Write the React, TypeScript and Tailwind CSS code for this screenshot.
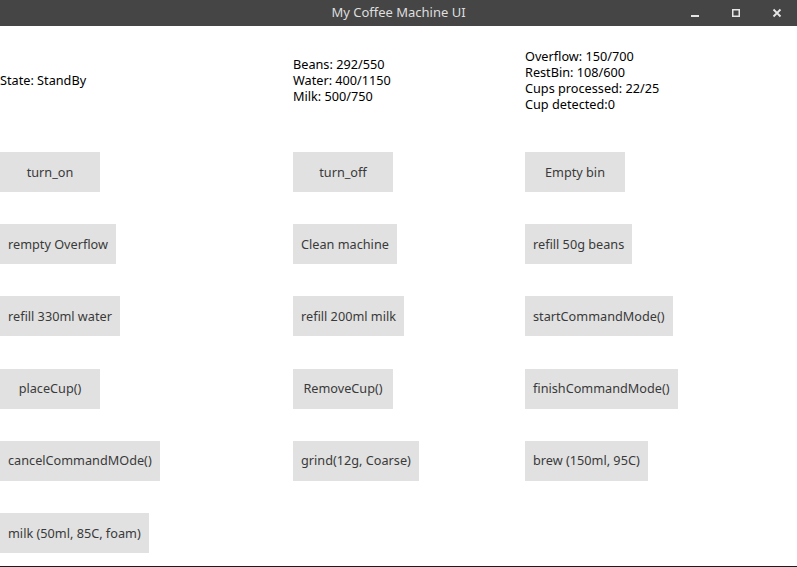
import React from 'react';

const font = { fontFamily: '"Noto Sans", "DejaVu Sans", sans-serif' };

function Btn({ label }: { label: string }) {
  return (
    <div>
      <button className="h-[40px] min-w-[100px] px-[8px] bg-[#e1e1e1] text-[#3a3a3a] text-[12.7px] leading-none whitespace-nowrap">
        {label}
      </button>
    </div>
  );
}

const rows: (string | null)[][] = [
  ['turn_on', 'turn_off', 'Empty bin'],
  ['rempty Overflow', 'Clean machine', 'refill 50g beans'],
  ['refill 330ml water', 'refill 200ml milk', 'startCommandMode()'],
  ['placeCup()', 'RemoveCup()', 'finishCommandMode()'],
  ['cancelCommandMOde()', 'grind(12g, Coarse)', 'brew (150ml, 95C)'],
  ['milk (50ml, 85C, foam)', null, null],
];

export default function App() {
  return (
    <div className="w-[797px] h-[567px] flex flex-col bg-white border-b border-[#1c1c1c]" style={font}>
      {/* title bar */}
      <div className="relative h-[26px] bg-[#454545] flex items-center justify-center">
        <span className="text-[13px] text-[#dedede]">My Coffee Machine UI</span>
        <div className="absolute right-0 top-0 h-full flex items-center">
          <div className="w-[41px] flex justify-center">
            <svg width="10" height="10" viewBox="0 0 10 10">
              <rect x="1" y="7" width="8" height="2" fill="#e6e6e6" />
            </svg>
          </div>
          <div className="w-[41px] flex justify-center">
            <svg width="10" height="10" viewBox="0 0 10 10">
              <rect x="1.75" y="1.75" width="6.5" height="6.5" fill="none" stroke="#e6e6e6" strokeWidth="1.5" />
            </svg>
          </div>
          <div className="w-[41px] flex justify-center">
            <svg width="10" height="10" viewBox="0 0 10 10">
              <path d="M1.5 1.5 L8.5 8.5 M8.5 1.5 L1.5 8.5" stroke="#e6e6e6" strokeWidth="1.8" />
            </svg>
          </div>
        </div>
      </div>

      {/* status */}
      <div className="h-[108px] grid grid-cols-[293px_232px_1fr] items-center text-[12.7px] leading-[16px] text-black">
        <div>State: StandBy</div>
        <div className="whitespace-pre-line">{'Beans: 292/550\nWater: 400/1150\nMilk: 500/750'}</div>
        <div className="whitespace-pre-line">
          {'Overflow: 150/700\nRestBin: 108/600\nCups processed: 22/25\nCup detected:0'}
        </div>
      </div>

      {/* buttons */}
      <div className="pt-[18px] flex flex-col gap-y-[32.2px]">
        {rows.map((row, i) => (
          <div key={i} className="grid grid-cols-[293px_232px_1fr]">
            {row.map((b, j) => (b ? <Btn key={j} label={b} /> : <div key={j} />))}
          </div>
        ))}
      </div>
    </div>
  );
}
